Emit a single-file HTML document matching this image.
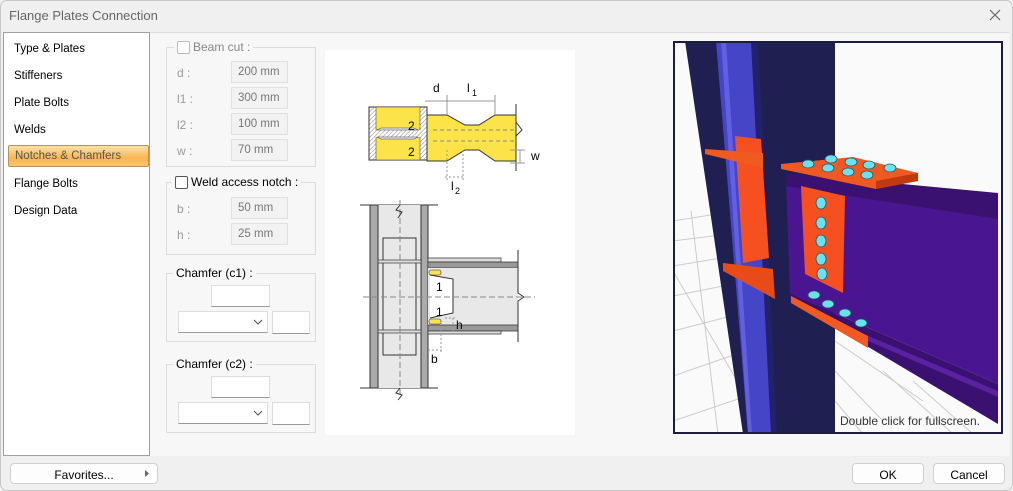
<!DOCTYPE html>
<html><head><meta charset="utf-8"><style>
*{box-sizing:border-box;margin:0;padding:0}
body{width:1013px;height:491px;overflow:hidden;background:#f0f0f0;font-family:"Liberation Sans",sans-serif;font-size:12px;color:#000;position:relative}
.abs{position:absolute}
.win{left:0;top:0;width:1013px;height:491px;border:1px solid #c8c8c8;border-radius:7px;background:#f0f0f0}
.title{left:9px;top:8px;font-size:13px;color:#666}
.nav{left:3px;top:32px;width:147px;height:424px;background:#fff;border:1px solid #a0a0a0}
.nav div{position:absolute;left:10px;font-size:11.5px}
.sel{left:4px!important;width:141px;height:22px;border:1px solid #b8925a;border-radius:2px;background:linear-gradient(#fde2a8,#f9b552 60%,#fcc66e);color:#555;padding:4px 0 0 6px}
.content{left:150px;top:32px;width:859px;height:424px;background:#f7f7f7;border-top:1px solid #ddd}
.grp{border:1px solid #dcdcdc}
.lab{color:#9a9a9a}
.box{background:#f2f2f2;border:1px solid #e0e0e0;color:#777;padding:4px 0 0 6px;width:57px;height:22px;font-size:11.5px}
.in{background:#fff;border:1px solid #ddd;border-bottom:1px solid #999}
.cb{width:13px;height:13px;border:1px solid #999;border-radius:2px;background:#fff}
.btn{background:#fdfdfd;border:1px solid #d0d0d0;border-radius:4px;text-align:center;padding-top:4px}
</style></head><body>
<div class="abs win"></div>
<div class="abs title">Flange Plates Connection</div>
<svg class="abs" style="left:989px;top:9px" width="12" height="12"><path d="M1 1L11 11M11 1L1 11" stroke="#666" stroke-width="1.2"/></svg>
<div class="abs nav">
<div style="top:10px">Type &amp; Plates</div>
<div style="top:37px">Stiffeners</div>
<div style="top:64px">Plate Bolts</div>
<div style="top:91px">Welds</div>
<div class="sel" style="top:112px">Notches &amp; Chamfers</div>
<div style="top:145px">Flange Bolts</div>
<div style="top:172px">Design Data</div>
</div>
<div class="abs content"></div>
<div class="abs grp" style="left:166px;top:47px;width:150px;height:120px"></div>
<div class="abs" style="left:174px;top:40px;background:#f7f7f7;padding:0 3px;display:flex;align-items:center;gap:3px"><div class="cb" style="border-color:#bbb"></div><span class="lab" style="color:#888">Beam cut :</span></div>
<div class="abs lab" style="left:177px;top:66px">d :</div><div class="abs box" style="left:231px;top:61px">200 mm</div>
<div class="abs lab" style="left:177px;top:92px">l1 :</div><div class="abs box" style="left:231px;top:87px">300 mm</div>
<div class="abs lab" style="left:177px;top:118px">l2 :</div><div class="abs box" style="left:231px;top:113px">100 mm</div>
<div class="abs lab" style="left:177px;top:144px">w :</div><div class="abs box" style="left:231px;top:139px">70 mm</div>
<div class="abs grp" style="left:166px;top:182px;width:150px;height:73px"></div>
<div class="abs" style="left:172px;top:175px;background:#f7f7f7;padding:0 3px;display:flex;align-items:center;gap:3px"><div class="cb" style="border-color:#555"></div><span>Weld access notch :</span></div>
<div class="abs lab" style="left:177px;top:202px">b :</div><div class="abs box" style="left:231px;top:197px">50 mm</div>
<div class="abs lab" style="left:177px;top:228px">h :</div><div class="abs box" style="left:231px;top:223px">25 mm</div>
<div class="abs grp" style="left:166px;top:273px;width:150px;height:69px"></div>
<div class="abs" style="left:173px;top:266px;background:#f7f7f7;padding:0 3px">Chamfer (c1) :</div>
<div class="abs in" style="left:211px;top:285px;width:59px;height:22px"></div>
<div class="abs in" style="left:178px;top:311px;width:90px;height:22px"></div>
<svg class="abs" style="left:253px;top:319px" width="10" height="6"><path d="M1 1L5 5L9 1" stroke="#555" fill="none"/></svg>
<div class="abs in" style="left:272px;top:311px;width:38px;height:23px"></div>
<div class="abs grp" style="left:166px;top:364px;width:150px;height:69px"></div>
<div class="abs" style="left:173px;top:357px;background:#f7f7f7;padding:0 3px">Chamfer (c2) :</div>
<div class="abs in" style="left:211px;top:376px;width:59px;height:22px"></div>
<div class="abs in" style="left:178px;top:402px;width:90px;height:22px"></div>
<svg class="abs" style="left:253px;top:410px" width="10" height="6"><path d="M1 1L5 5L9 1" stroke="#555" fill="none"/></svg>
<div class="abs in" style="left:272px;top:402px;width:38px;height:23px"></div>
<svg class="abs" style="left:325px;top:50px" width="250" height="385" viewBox="0 0 250 385">
<defs><pattern id="h" width="3" height="3" patternUnits="userSpaceOnUse" patternTransform="rotate(45)"><rect width="3" height="3" fill="#fff"/><path d="M0 0V3" stroke="#666" stroke-width=".8"/></pattern></defs>
<rect width="250" height="385" fill="#fff"/>
<g font-family="Liberation Sans" font-size="12" fill="#000">
<rect x="44" y="57" width="58" height="53" fill="url(#h)" stroke="#333"/>
<rect x="51" y="57" width="44" height="23" fill="#fde34a" stroke="#333" stroke-width=".5"/>
<rect x="51" y="87" width="44" height="23" fill="#fde34a" stroke="#333" stroke-width=".5"/>
<path d="M51 80H95V87H51Z" fill="url(#h)"/>
<path d="M56 78H89L93 80H52ZM56 89H89L93 87H52Z" fill="#eee" stroke="#333" stroke-width=".5"/>
<text x="83" y="80">2</text><text x="83" y="106">2</text>
<path d="M102 65H122L140 75H154L170 65H191V111H170L154 100H140L122 111H102Z" fill="#fde34a" stroke="#333"/>
<path d="M108 80H191M108 91H191" stroke="#888" stroke-dasharray="4 3"/>
<path d="M191 54V72L197 80L191 86V121" stroke="#333" fill="none"/>
<path d="M100 51H170M122 45V65M170 45V65" stroke="#999"/>
<path d="M122 100V130M138 100V130M120 127H140" stroke="#999" stroke-dasharray="2 2"/>
<path d="M195 100V113M185 100H200M185 113H200" stroke="#999"/>
<text x="108" y="42">d</text><text x="142" y="42">l</text><text x="147" y="46" font-size="9">1</text>
<text x="126" y="140">l</text><text x="130" y="144" font-size="9">2</text>
<text x="206" y="110">w</text>
<path d="M35 155H113M35 338H113" stroke="#333"/>
<rect x="53" y="155" width="43" height="183" fill="#e8e8e8"/>
<rect x="45" y="155" width="8" height="183" fill="#aaa" stroke="#333"/>
<rect x="96" y="155" width="7" height="183" fill="#aaa" stroke="#333"/>
<rect x="58" y="188" width="33" height="117" fill="none" stroke="#333"/>
<rect x="53" y="210" width="43" height="3" fill="#ddd" stroke="#333" stroke-width=".7"/>
<rect x="53" y="280" width="43" height="3" fill="#ddd" stroke="#333" stroke-width=".7"/>
<path d="M103 208H176V212H103Z" fill="#ddd" stroke="#333" stroke-width=".7"/>
<path d="M103 212H193V218H103Z" fill="#999" stroke="#333" stroke-width=".7"/>
<path d="M103 218H193V275H103Z" fill="#e8e8e8"/>
<path d="M103 275H193V281H103Z" fill="#999" stroke="#333" stroke-width=".7"/>
<path d="M103 281H176V284H103Z" fill="#ddd" stroke="#333" stroke-width=".7"/>
<rect x="104" y="220" width="12" height="5" rx="2" fill="#fde34a" stroke="#333" stroke-width=".6"/>
<rect x="104" y="269" width="12" height="5" rx="2" fill="#fde34a" stroke="#333" stroke-width=".6"/>
<path d="M105 225L128 229V263L105 268" fill="#fff" stroke="#333"/>
<path d="M193 200V243L199 247L193 251V292" stroke="#333" fill="none"/>
<path d="M38 247H210" stroke="#888" stroke-dasharray="6 3"/>
<path d="M75 150V345" stroke="#888" stroke-dasharray="6 3"/>
<path d="M75 155L71 160L77 162L73 168M75 338L71 343L77 345L73 350" stroke="#333" fill="none"/>
<text x="111" y="241">1</text><text x="111" y="266">1</text>
<text x="131" y="279">h</text>
<path d="M120 268H130M128 268V282M103 300H118M116 272V303" stroke="#999" stroke-dasharray="2 2"/>
<text x="106" y="313">b</text>
</g>
</svg>
<svg class="abs" style="left:673px;top:41px" width="330" height="393" viewBox="0 0 330 393">
<rect width="330" height="393" fill="#fafafa"/>
<g stroke="#ccc" fill="none">
<path d="M0 180L50 172M0 200L55 193M0 225L60 215M0 255L65 242M0 290L70 272M0 335L72 310M0 380L74 355M18 170L45 393M0 230L70 350M162 330L210 380M162 300L250 360M210 330L280 393M162 360L190 393M240 340L300 393"/>
</g>
<path d="M12 0H162V393H70Z" fill="#1f1f52"/>
<path d="M43 0H83L100 393H75Z" fill="#4545c8"/>
<path d="M48 0H53L79 393H75Z" fill="#6060e0"/>
<path d="M78 0H85L104 393H98Z" fill="#22226a"/>
<path d="M62 95L88 98L96 217L70 222Z" fill="#f65020"/>
<path d="M32 108L90 112V127L32 113Z" fill="#ee5a20"/>
<path d="M50 222L100 228L102 258L50 230Z" fill="#e84a18"/>
<path d="M113 140L325 160V343L117 253Z" fill="#4a1590"/>
<path d="M113 132L325 152V178L113 145Z" fill="#3a1070"/>
<path d="M117 253L325 343V383L197 307L117 262Z" fill="#3a1070"/>
<path d="M160 280L325 350V356L165 287Z" fill="#5a22a0"/>
<path d="M108 123L180 116L245 132V140L203 148L108 128Z" fill="#f05a22"/>
<path d="M203 140L245 132V140L203 148Z" fill="#c03a10"/>
<path d="M128 145L172 155L170 252L132 233Z" fill="#f65020"/>
<path d="M118 255L195 295V307L118 262Z" fill="#f05a22"/>
<g fill="#6de0ee" stroke="#2a5560" stroke-width=".8">
<ellipse cx="135" cy="123" rx="6" ry="4"/><ellipse cx="158" cy="118" rx="6" ry="4"/><ellipse cx="155" cy="127" rx="6" ry="4"/>
<ellipse cx="178" cy="121" rx="6" ry="4"/><ellipse cx="175" cy="131" rx="6" ry="4"/><ellipse cx="196" cy="124" rx="6" ry="4"/>
<ellipse cx="194" cy="134" rx="6" ry="4"/><ellipse cx="217" cy="127" rx="6" ry="4"/>
<ellipse cx="148" cy="162" rx="5" ry="6"/><ellipse cx="148" cy="182" rx="5" ry="6"/><ellipse cx="148" cy="200" rx="5" ry="6"/><ellipse cx="148" cy="218" rx="5" ry="6"/><ellipse cx="149" cy="233" rx="5" ry="6"/>
<ellipse cx="141" cy="254" rx="6" ry="4"/><ellipse cx="155" cy="263" rx="6" ry="4"/><ellipse cx="172" cy="272" rx="6" ry="4"/><ellipse cx="188" cy="282" rx="6" ry="4"/>
</g>
<text x="167" y="384" font-family="Liberation Sans" font-size="12" fill="#333" textLength="140" lengthAdjust="spacingAndGlyphs">Double click for fullscreen.</text>
<rect x="1" y="1" width="328" height="391" fill="none" stroke="#1c1c3c" stroke-width="2"/>
</svg>
<div class="abs btn" style="left:10px;top:463px;width:148px;height:21px">Favorites...</div>
<svg class="abs" style="left:145px;top:470px" width="5" height="7"><path d="M0 0L4 3.5L0 7Z" fill="#666"/></svg>
<div class="abs btn" style="left:852px;top:463px;width:72px;height:21px">OK</div>
<div class="abs btn" style="left:933px;top:463px;width:72px;height:21px">Cancel</div>
</body></html>
